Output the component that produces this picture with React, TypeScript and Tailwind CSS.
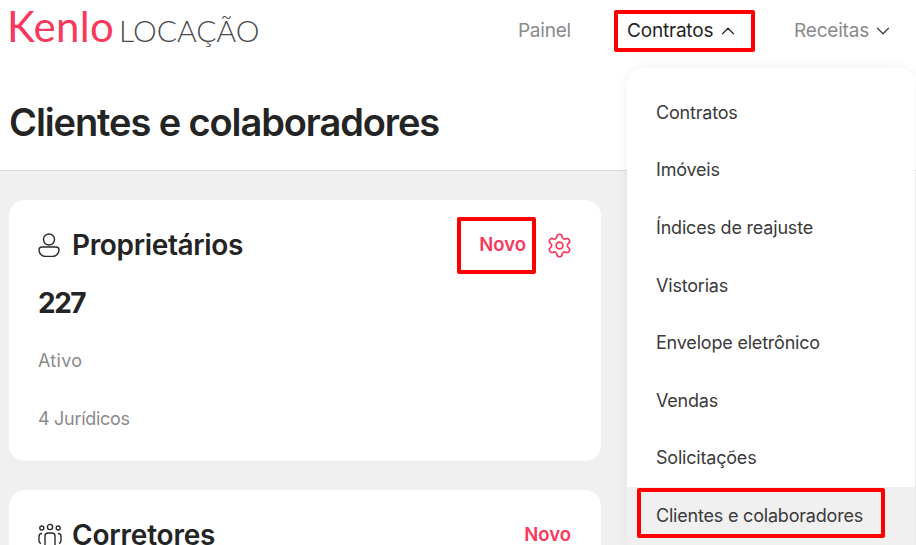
import { ChevronDown, ChevronUp, Settings } from 'lucide-react'

const menuItems = [
  'Contratos',
  'Imóveis',
  'Índices de reajuste',
  'Vistorias',
  'Envelope eletrônico',
  'Vendas',
  'Solicitações',
]

function PersonIcon() {
  return (
    <svg width="22" height="24" viewBox="0 0 22 24" fill="none" stroke="#2b2b2b" strokeWidth="1.4" className="shrink-0">
      <circle cx="11" cy="6.5" r="5.5" />
      <path d="M1 17a3 3 0 0 1 3-3h14a3 3 0 0 1 3 3 6.5 6.5 0 0 1-6.5 6.5h-7A6.5 6.5 0 0 1 1 17z" />
    </svg>
  )
}

function TeamIcon() {
  return (
    <svg width="24" height="24" viewBox="0 0 24 24" fill="none" stroke="#2b2b2b" strokeWidth="1.4" className="shrink-0">
      <circle cx="12" cy="4" r="2.6" />
      <circle cx="3.8" cy="5" r="2" />
      <circle cx="20.2" cy="5" r="2" />
      <path d="M7 22v-9a3 3 0 0 1 3-3h4a3 3 0 0 1 3 3v9" />
      <path d="M4 10.5a3 3 0 0 0-3 3V18a3 3 0 0 0 2 2.5" />
      <path d="M20 10.5a3 3 0 0 1 3 3V18a3 3 0 0 1-2 2.5" />
    </svg>
  )
}

export default function App() {
  return (
    <div className="relative h-[545px] w-[916px] overflow-hidden bg-[#f0f0f0] font-['Inter',sans-serif] text-[#242424]">
      {/* Top bar + title */}
      <div className="h-[171px] border-b border-[#d9d9d9] bg-white pl-[9px]">
        <div className="flex h-[62px] items-center justify-between pr-[22px]">
          <div className="-ml-[2px] -mt-[10px] flex items-baseline">
            <span className="font-['Lato',sans-serif] text-[42px] leading-none tracking-[0.3px] text-[#f8395d]">Kenlo</span>
            <span className="ml-[5px] font-['Lato',sans-serif] text-[30px] font-light leading-none text-[#4a4a4a]">LOCAÇÃO</span>
          </div>
          <nav className="flex items-center text-[19px] tracking-[-0.2px]">
            <span className="text-[#8a8a8a]">Painel</span>
            <div className="ml-[43px] flex h-[42px] w-[141px] items-center gap-[4px] rounded-[2px] border-[4px] border-[#ff0000] pl-[9px] text-[#242424]">
              Contratos
              <ChevronUp className="h-[22px] w-[22px]" strokeWidth={1.3} />
            </div>
            <div className="ml-[39px] flex items-center gap-[3px] text-[#8a8a8a]">
              <span>Receitas</span>
              <ChevronDown className="h-[22px] w-[22px] text-[#3a3a3a]" strokeWidth={1.3} />
            </div>
          </nav>
        </div>
        <h1 className="mt-[36px] text-[38px] font-semibold leading-[48px] tracking-[-1.1px]">Clientes e colaboradores</h1>
      </div>

      {/* Cards */}
      <div className="ml-[9px] flex w-[592px] flex-col gap-[29px] pt-[29px]">
        <div className="h-[261px] shrink-0 rounded-[16px] bg-white pl-[29px] pr-[28px]">
          <div className="flex h-[90px] items-center justify-between">
            <div className="flex items-center gap-[12px]">
              <PersonIcon />
              <span className="text-[28px] font-semibold tracking-[-0.35px]">Proprietários</span>
            </div>
            <div className="flex items-center gap-[10px]">
              <div className="flex h-[57px] w-[79px] items-center justify-end rounded-[2px] border-[4px] border-[#ff0000] pr-[6px] text-[18.5px] font-semibold text-[#f8395d]">
                Novo
              </div>
              <Settings className="h-[27px] w-[27px] text-[#f8395d]" strokeWidth={1.5} />
            </div>
          </div>
          <p className="-mt-[5px] text-[28px] font-bold leading-[36px] tracking-[-1.5px]">227</p>
          <p className="mt-[28px] text-[18px] leading-[24px] tracking-[0.3px] text-[#8a8a8a]">Ativo</p>
          <p className="mt-[34px] text-[18px] leading-[24px] tracking-[-0.3px] text-[#8a8a8a]">4 Jurídicos</p>
        </div>
        <div className="h-[120px] shrink-0 rounded-[16px] bg-white pl-[29px] pr-[30px]">
          <div className="flex h-[90px] items-center justify-between">
            <div className="flex items-center gap-[10px]">
              <TeamIcon />
              <span className="text-[28px] font-semibold tracking-[-0.2px]">Corretores</span>
            </div>
            <span className="text-[18.5px] font-semibold text-[#f8395d]">Novo</span>
          </div>
        </div>
      </div>

      {/* Dropdown */}
      <div className="absolute left-[627px] top-[68px] w-[288px] rounded-t-[16px] bg-white pt-[15.5px] shadow-[0_0_12px_rgba(0,0,0,0.06)]">
        {menuItems.map((item) => (
          <div key={item} className="flex h-[57.6px] items-center pl-[29px] text-[18px] tracking-[-0.2px] text-[#3a3a3a]">
            {item}
          </div>
        ))}
        <div className="relative flex h-[59px] items-center bg-[#f0f0f0] pb-[2px] pl-[29px] text-[18px] tracking-[-0.2px] text-[#3a3a3a]">
          Clientes e colaboradores
          <div className="absolute left-[10px] top-[1px] h-[50px] w-[248px] rounded-[2px] border-[4px] border-[#ff0000]" />
        </div>
      </div>
    </div>
  )
}
